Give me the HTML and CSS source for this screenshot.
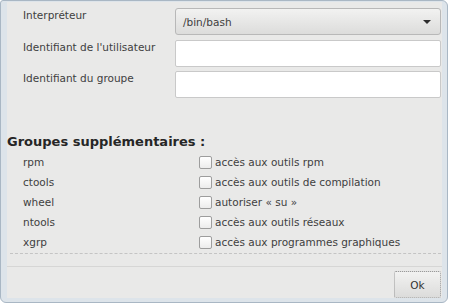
FILE: index.html
```html
<!DOCTYPE html>
<html lang="fr">
<head>
    <meta charset="UTF-8">
    <title>Utilisateur</title>
    <link rel="stylesheet" href="styles.css">
</head>
<body>
    <div class="window">
        <div class="content">
            <div class="form-grid">
                <label class="field-label">Interpréteur</label>
                <div class="combo">
                    <span>/bin/bash</span>
                    <span class="arrow"></span>
                </div>
                <label class="field-label">Identifiant de l'utilisateur</label>
                <input type="text" class="entry">
                <label class="field-label">Identifiant du groupe</label>
                <input type="text" class="entry">
            </div>

            <h2 class="section-title">Groupes supplémentaires :</h2>
            <div class="groups">
                <div class="group-row">
                    <span class="group-name">rpm</span>
                    <span class="check"></span>
                    <span class="group-desc">accès aux outils rpm</span>
                </div>
                <div class="group-row">
                    <span class="group-name">ctools</span>
                    <span class="check"></span>
                    <span class="group-desc">accès aux outils de compilation</span>
                </div>
                <div class="group-row">
                    <span class="group-name">wheel</span>
                    <span class="check"></span>
                    <span class="group-desc">autoriser « su »</span>
                </div>
                <div class="group-row">
                    <span class="group-name">ntools</span>
                    <span class="check"></span>
                    <span class="group-desc">accès aux outils réseaux</span>
                </div>
                <div class="group-row">
                    <span class="group-name">xgrp</span>
                    <span class="check"></span>
                    <span class="group-desc">accès aux programmes graphiques</span>
                </div>
            </div>
            <div class="dashed"></div>
        </div>
        <div class="footer">
            <button class="btn">Ok</button>
        </div>
    </div>
</body>
</html>
```

FILE: styles.css
```css
body {
    margin: 0;
    background: #ffffff;
    font-family: 'DejaVu Sans', sans-serif;
    font-size: 10.5px;
    color: #404040;
}
.window {
    width: 435px;
    height: 296px;
    padding: 1px 5px 4px 6px;
    border: 1px solid #a9b7c4;
    border-radius: 3px 6px 6px 6px;
    background: #dde4ea;
    display: flex;
    flex-direction: column;
}
.content {
    flex: 1;
    background: #e9e9e8;
    padding: 6px 1px 0 16px;
}
.form-grid {
    display: grid;
    grid-template-columns: 152px 266px;
    row-gap: 4px;
}
.field-label {
    line-height: 12px;
    padding-top: 1px;
}
.combo {
    height: 25px;
    border: 1px solid #b8b8b8;
    border-radius: 3px;
    background: linear-gradient(#f2f2f1, #dcdcdb);
    display: flex;
    align-items: center;
    justify-content: space-between;
    padding: 0 9px 0 7px;
    margin-bottom: 1px;
}
.arrow {
    width: 0;
    height: 0;
    border-left: 4px solid transparent;
    border-right: 4px solid transparent;
    border-top: 4px solid #2e2e2e;
}
.entry {
    box-sizing: border-box;
    height: 27px;
    margin: 0;
    border: 1px solid #c9c9c9;
    border-radius: 2px;
    background: #ffffff;
}
.section-title {
    margin: 36px 0 2px -16px;
    font-size: 13px;
    line-height: 16px;
    font-weight: bold;
    color: #262626;
}
.group-row {
    display: flex;
    align-items: center;
    height: 20px;
}
.group-name {
    width: 176px;
}
.check {
    box-sizing: border-box;
    width: 13px;
    height: 13px;
    border: 1px solid #9d9d9d;
    border-radius: 2px;
    background: linear-gradient(#ffffff, #ececec);
    margin-right: 3px;
}
.dashed {
    margin: 1px 0 0 -13px;
    border-top: 1px dashed #c4c4c4;
}
.footer {
    background: #e9e9e8;
    border-top: 1px solid #d6d6d5;
    margin-top: -1px;
    height: 31px;
    display: flex;
    justify-content: flex-end;
    align-items: flex-end;
    padding-right: 1px;
}
.btn {
    width: 47px;
    height: 27px;
    margin: 0;
    font-family: 'DejaVu Sans', sans-serif;
    font-size: 10.5px;
    color: #333;
    border: 1px dotted #9a9a9a;
    border-radius: 2px;
    background: linear-gradient(#f2f2f1, #dcdcdb);
}
```
